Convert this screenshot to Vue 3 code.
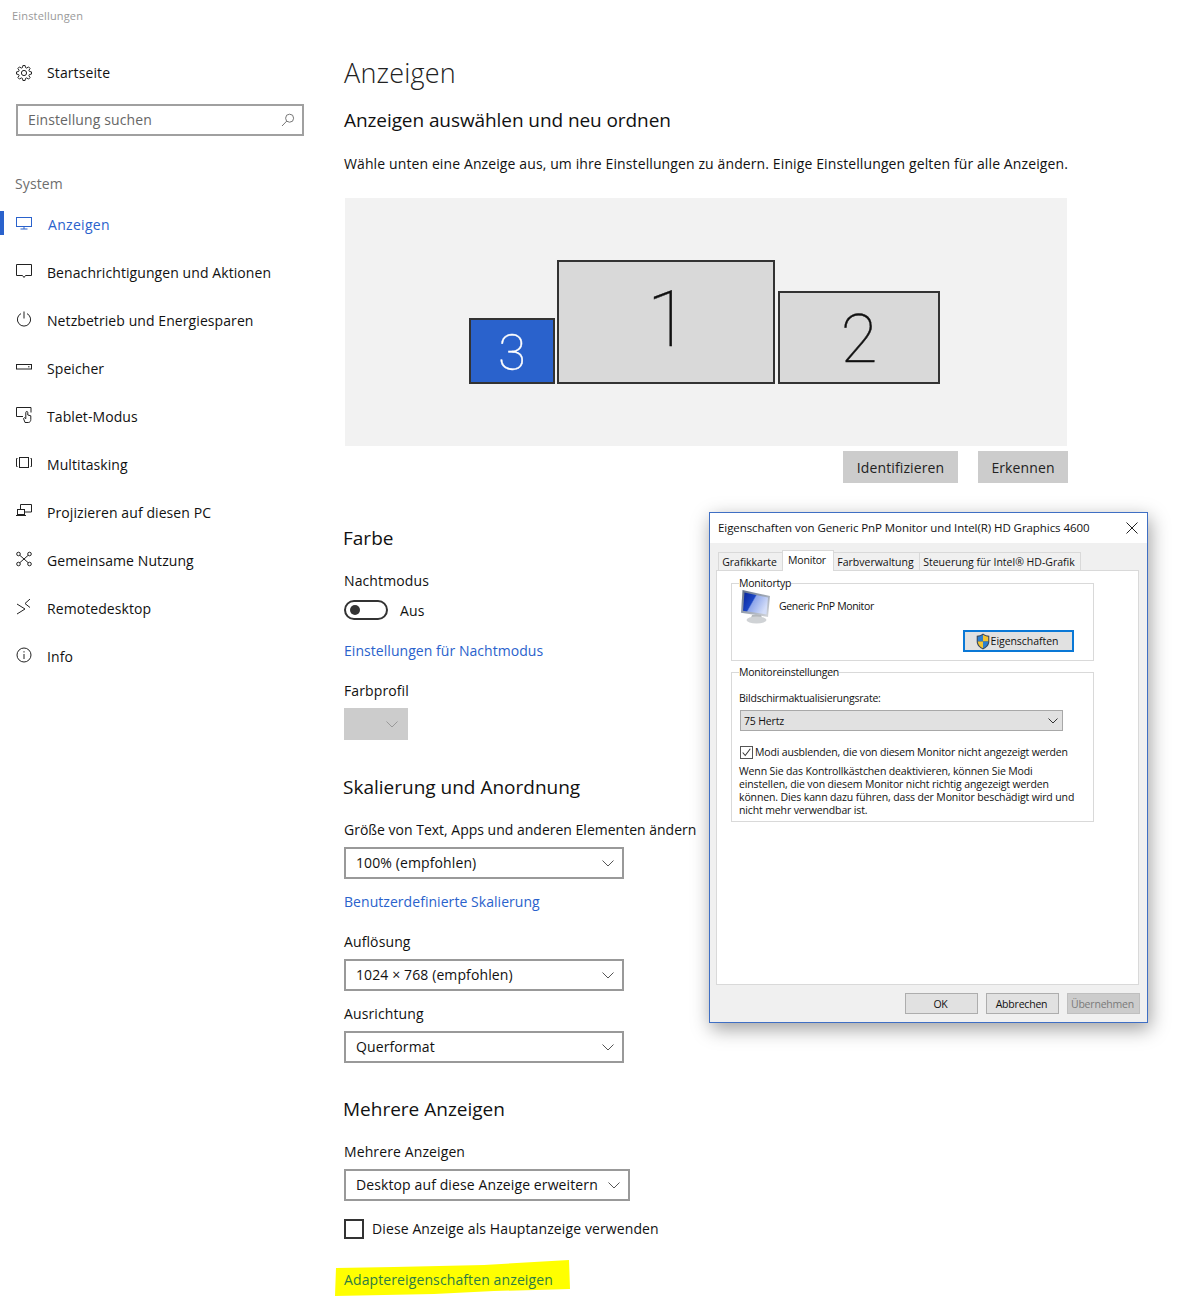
<script setup>
const gear = (() => {
  const pts = [];
  const n = 8;
  for (let i = 0; i < n; i++) {
    const a = (i / n) * Math.PI * 2;
    const w = Math.PI / n;
    const p = (r, t) => `${(8 + r * Math.cos(t)).toFixed(2)} ${(8 + r * Math.sin(t)).toFixed(2)}`;
    pts.push(p(5.6, a - w * 0.72), p(7.6, a - w * 0.36), p(7.6, a + w * 0.36), p(5.6, a + w * 0.72));
  }
  return 'M' + pts.join('L') + 'Z';
})();

const navItems = [
  { label: 'Anzeigen', icon: 'display', active: true },
  { label: 'Benachrichtigungen und Aktionen', icon: 'note' },
  { label: 'Netzbetrieb und Energiesparen', icon: 'power' },
  { label: 'Speicher', icon: 'storage' },
  { label: 'Tablet-Modus', icon: 'tablet' },
  { label: 'Multitasking', icon: 'multi' },
  { label: 'Projizieren auf diesen PC', icon: 'project' },
  { label: 'Gemeinsame Nutzung', icon: 'share' },
  { label: 'Remotedesktop', icon: 'remote' },
  { label: 'Info', icon: 'info' }
];

const tabs = [
  { label: 'Grafikkarte', w: 65 },
  { label: 'Monitor', w: 52, active: true },
  { label: 'Farbverwaltung', w: 87 },
  { label: 'Steuerung für Intel® HD-Grafik', w: 162 }
];
</script>

<template>
  <div class="page">
    <aside class="side">
      <div class="app-title">Einstellungen</div>
      <div class="home">
        <svg class="ico" viewBox="0 0 16 16"><path :d="gear" /><circle cx="8" cy="8" r="2.6" /></svg>
        <span>Startseite</span>
      </div>
      <div class="search">
        <span>Einstellung suchen</span>
        <svg class="search-ico" viewBox="0 0 14 14"><circle cx="8.6" cy="5.2" r="4" /><path d="M5.8 8 1 13" /></svg>
      </div>
      <div class="sys">System</div>
      <nav class="nav">
        <div v-for="item in navItems" :key="item.label" class="nav-item" :class="{ active: item.active }">
          <svg class="ico" viewBox="0 0 16 16">
            <g v-if="item.icon === 'display'"><rect x="0.5" y="2.5" width="15" height="9" /><path d="M8 11.5V14M4.5 14h7" /></g>
            <path v-else-if="item.icon === 'note'" d="M.5 1.5h15v11H9.5L8 14.5 6.5 12.5H.5z" />
            <g v-else-if="item.icon === 'power'"><path d="M8 .5v7" /><path d="M5 2.6a6.6 6.6 0 1 0 6 0" /></g>
            <g v-else-if="item.icon === 'storage'"><rect x="0.5" y="5.5" width="15" height="4.5" /><path d="M12 7.8h1.5" /></g>
            <g v-else-if="item.icon === 'tablet'"><path d="M7 9.500H.5V.5h14.500v5" /><path d="M9 15.500 7.500 11.500l1-.8 1.300 1V5.500a1 1 0 0 1 2 0V8l3 .8v3.700c0 1.500-.8 3-2.500 3z" /></g>
            <g v-else-if="item.icon === 'multi'"><rect x="3.500" y="2.500" width="9" height="10" /><path d="M1.500 3.500H.5v8h1M14.500 3.500h1v8h-1" /></g>
            <g v-else-if="item.icon === 'project'"><path d="M4.500 6V1.500h11v7.500H9" /><rect x="1.500" y="6.500" width="7" height="5" /><path d="M0 12.500h10" /></g>
            <g v-else-if="item.icon === 'share'"><circle cx="2.500" cy="3" r="1.800" /><circle cx="13.500" cy="3" r="1.800" /><circle cx="2.500" cy="13" r="1.800" /><circle cx="13.500" cy="13" r="1.800" /><path d="M3.800 4.300 12.200 11.700M12.200 4.300 3.800 11.700" /></g>
            <g v-else-if="item.icon === 'remote'"><path d="M1 5 9 10 1 15" /><path d="M14 0 9 4.500 14 8.500" /></g>
            <g v-else-if="item.icon === 'info'"><circle cx="8" cy="8" r="7" /><path d="M8 7v5M8 4.200v1.300" /></g>
          </svg>
          <span class="nav-text">{{ item.label }}</span>
        </div>
      </nav>
    </aside>

    <main class="main">
      <h1 class="title">Anzeigen</h1>
      <h2 class="sub">Anzeigen auswählen und neu ordnen</h2>
      <p class="desc">Wähle unten eine Anzeige aus, um ihre Einstellungen zu ändern. Einige Einstellungen gelten für alle Anzeigen.</p>

      <div class="canvas">
        <div class="mon mon3">3</div>
        <div class="mon mon1">1</div>
        <div class="mon mon2">2</div>
      </div>
      <div class="canvas-btns">
        <div class="gbtn b-id">Identifizieren</div>
        <div class="gbtn b-er">Erkennen</div>
      </div>

      <h2 class="sec s-farbe">Farbe</h2>
      <div class="lbl mt19">Nachtmodus</div>
      <div class="toggle-row">
        <span class="toggle"><i></i></span>
        <span>Aus</span>
      </div>
      <div class="link mt21">Einstellungen für Nachtmodus</div>
      <div class="lbl mt20">Farbprofil</div>
      <div class="mini-select">
        <svg class="chev" viewBox="0 0 12 7"><path d="M.5.5 6 6 11.500.5" /></svg>
      </div>

      <h2 class="sec s-skal">Skalierung und Anordnung</h2>
      <div class="lbl tight mt19">Größe von Text, Apps und anderen Elementen ändern</div>
      <div class="select">
        <span class="raise">100% (empfohlen)</span>
        <svg class="chev" viewBox="0 0 12 7"><path d="M.5.5 6 6 11.500.5" /></svg>
      </div>
      <div class="link mt13">Benutzerdefinierte Skalierung</div>
      <div class="lbl mt20">Auflösung</div>
      <div class="select">
        <span class="raise">1024 × 768 (empfohlen)</span>
        <svg class="chev" viewBox="0 0 12 7"><path d="M.5.5 6 6 11.500.5" /></svg>
      </div>
      <div class="lbl mt13">Ausrichtung</div>
      <div class="select">
        <span class="raise">Querformat</span>
        <svg class="chev" viewBox="0 0 12 7"><path d="M.5.5 6 6 11.500.5" /></svg>
      </div>

      <h2 class="sec s-mehr">Mehrere Anzeigen</h2>
      <div class="lbl mt19">Mehrere Anzeigen</div>
      <div class="select wide">
        <span class="raise">Desktop auf diese Anzeige erweitern</span>
        <svg class="chev" viewBox="0 0 12 7"><path d="M.5.5 6 6 11.500.5" /></svg>
      </div>
      <div class="check-row">
        <span class="check"></span>
        <span class="raise">Diese Anzeige als Hauptanzeige verwenden</span>
      </div>
      <div class="hl-link">
        <svg class="marker" viewBox="0 0 238 38"><path d="M2 9 60 8 150 6 235 1 236 30 160 32 100 35 1 37Z" /></svg>
        <span>Adaptereigenschaften anzeigen</span>
      </div>
    </main>

    <section class="dialog">
      <header class="d-title">
        <span>Eigenschaften von Generic PnP Monitor und Intel(R) HD Graphics 4600</span>
        <svg class="d-x" viewBox="0 0 12 12"><path d="M.5.5l11 11M11.500.5l-11 11" /></svg>
      </header>
      <div class="d-body">
        <div class="tabs">
          <div v-for="t in tabs" :key="t.label" class="tab" :class="{ on: t.active }" :style="{ width: t.w + 'px' }">{{ t.label }}</div>
        </div>
        <div class="panel">
          <fieldset class="grp g1">
            <legend>Monitortyp</legend>
            <div class="mon-row">
              <svg class="mon-ico" viewBox="0 0 30 34">
                <defs>
                  <linearGradient id="sg" x1="0" y1="0" x2="1" y2="0.5"><stop offset="0" stop-color="#08249a" /><stop offset="0.45" stop-color="#1c46c4" /><stop offset="0.5" stop-color="#8ea6ea" /><stop offset="1" stop-color="#d3ddf8" /></linearGradient>
                  <linearGradient id="fr" x1="0" y1="0" x2="1" y2="1"><stop offset="0" stop-color="#5f6f88" /><stop offset="1" stop-color="#d8dadd" /></linearGradient>
                </defs>
                <path d="M1.500 0 29 6 27 27 0 22.700Z" fill="url(#fr)" />
                <path d="M3.500 2.500 27 7.500 25.500 24.500 2 20.700Z" fill="url(#sg)" />
                <path d="M11 25h9l1 3H10Z" fill="#b4b8bc" />
                <ellipse cx="15.500" cy="30" rx="10" ry="3.500" fill="#cfd2d5" />
              </svg>
              <span>Generic PnP Monitor</span>
            </div>
            <div class="shield-btn">
              <svg class="shield" viewBox="0 0 14 17">
                <path d="M7 .5C5 2 3 2.700.7 2.800v6C.7 12.500 4 15 7 16.500c3-1.500 6.300-4 6.300-7.700v-6C11 2.700 9 2 7 .5Z" fill="#3c4a5c" />
                <path d="M7 1.800v6.700H1.800V3.700C3.600 3.500 5.500 3 7 1.800Z" fill="#2c7fd0" />
                <path d="M7 1.800v6.700h5.200V3.700C10.400 3.500 8.500 3 7 1.800Z" fill="#f4c430" />
                <path d="M7 8.500v6.800C4.500 14 1.900 12 1.800 8.500Z" fill="#f4c430" />
                <path d="M7 8.500v6.800c2.500-1.300 5.100-3.300 5.200-6.800Z" fill="#2c7fd0" />
              </svg>
              <span>Eigenschaften</span>
            </div>
          </fieldset>
          <fieldset class="grp g2">
            <legend>Monitoreinstellungen</legend>
            <div class="rate-lbl">Bildschirmaktualisierungsrate:</div>
            <div class="rate">
              <span>75 Hertz</span>
              <svg class="rate-chev" viewBox="0 0 10 6"><path d="M.5.5 5 5 9.500.5" /></svg>
            </div>
            <div class="d-check">
              <span class="d-box"><svg viewBox="0 0 13 13"><path d="M2 6.500 5 10l6-8" /></svg></span>
              <span>Modi ausblenden, die von diesem Monitor nicht angezeigt werden</span>
            </div>
            <p class="hint">Wenn Sie das Kontrollkästchen deaktivieren, können Sie Modi<br />einstellen, die von diesem Monitor nicht richtig angezeigt werden<br />können. Dies kann dazu führen, dass der Monitor beschädigt wird und<br />nicht mehr verwendbar ist.</p>
          </fieldset>
        </div>
        <div class="d-actions">
          <div class="d-btn">OK</div>
          <div class="d-btn">Abbrechen</div>
          <div class="d-btn off">Übernehmen</div>
        </div>
      </div>
    </section>
  </div>
</template>

<style>
html, body { margin: 0; background: #fff; }
</style>

<style scoped>
.page {
  position: relative;
  display: flex;
  width: 1181px;
  height: 1298px;
  overflow: hidden;
  background: #fff;
  color: #111;
  font-family: "Open Sans", "Noto Sans", sans-serif;
  font-size: 14px;
  letter-spacing: 0.11px;
}
h1, h2, p { margin: 0; font-weight: 400; }

/* sidebar */
.side { width: 344px; flex: none; display: flex; flex-direction: column; }
.app-title { margin: 8px 0 0 12px; height: 16px; line-height: 16px; font-size: 11px; color: #999; letter-spacing: 0.17px; }
.home { display: flex; align-items: center; height: 24px; margin-top: 37px; padding-left: 16px; gap: 15px; }
.home span { padding-bottom: 2px; }
.ico { width: 16px; height: 16px; flex: none; fill: none; stroke: #222; stroke-width: 1; }
.search {
  display: flex; align-items: center; justify-content: space-between;
  box-sizing: border-box; width: 288px; height: 32px; margin: 19px 0 0 16px; padding: 0 7px 0 10px;
  border: 2px solid #a0a0a0; color: #666;
}
.search span { padding-bottom: 2px; }
.search-ico { width: 14px; height: 14px; fill: none; stroke: #777; stroke-width: 1; }
.sys { margin: 38px 0 0 15px; height: 20px; line-height: 20px; color: #6e6e6e; }
.nav { margin-top: 5px; }
.nav-item { position: relative; display: flex; align-items: center; height: 48px; padding-left: 16px; gap: 15px; }
.nav-text { padding-top: 2px; letter-spacing: 0.08px; }
.nav-item.active { color: #2a62cc; gap: 16px; }
.nav-item.active .nav-text { letter-spacing: 0.3px; }
.nav-item.active .ico { stroke: #2a62cc; }
.nav-item.active::before { content: ""; position: absolute; left: 0; top: 12px; width: 4px; height: 24px; background: #2a62cc; }

/* main column */
.main { flex: 1; min-width: 0; padding-top: 53px; }
.title { height: 40px; line-height: 40px; font-size: 27px; font-weight: 300; color: #222; letter-spacing: 0.2px; }
.sub { height: 28px; line-height: 28px; margin-top: 13px; font-size: 19px; color: #111; letter-spacing: -0.08px; }
.desc { height: 20px; line-height: 20px; margin-top: 20px; white-space: nowrap; }
.canvas { position: relative; width: 722px; height: 248px; margin: 24px 0 0 1px; background: #f2f2f2; }
.mon {
  position: absolute; box-sizing: border-box; display: flex; align-items: center; justify-content: center;
  border: 2px solid #333; background: #d9d9d9; color: #111;
  font-family: "Roboto", sans-serif; font-weight: 100; line-height: 1;
  -webkit-text-stroke: 0.4px currentColor; letter-spacing: 0;
}
.mon1 { left: 212px; top: 62px; width: 218px; height: 124px; font-size: 77px; padding: 0 0 4px 4px; }
.mon2 { left: 433px; top: 93px; width: 162px; height: 93px; font-size: 67px; padding-top: 4px; }
.mon3 { left: 124px; top: 120px; width: 86px; height: 66px; font-size: 50px; background: #2a62cc; color: #fff; padding-top: 4px; }
.canvas-btns { display: flex; justify-content: flex-end; gap: 20px; width: 724px; margin-top: 5px; }
.gbtn { height: 32px; line-height: 34px; background: #cccccc; text-align: center; color: #222; }
.b-id { width: 115px; }
.b-er { width: 90px; }
.sec { height: 28px; line-height: 28px; margin-left: -1px; font-size: 19px; color: #111; letter-spacing: 0; }
.s-farbe { margin-top: 41px; }
.s-skal { margin-top: 33px; }
.s-mehr { margin-top: 32px; }
.lbl { height: 20px; line-height: 20px; white-space: nowrap; }
.tight { letter-spacing: 0; }
.link { height: 20px; line-height: 20px; color: #2a62cc; letter-spacing: 0.05px; }
.mt13 { margin-top: 13px; }
.mt19 { margin-top: 19px; }
.mt20 { margin-top: 20px; }
.mt21 { margin-top: 21px; }
.toggle-row { display: flex; align-items: center; height: 20px; margin-top: 9px; gap: 12px; }
.toggle { box-sizing: border-box; display: flex; align-items: center; width: 44px; height: 20px; padding-left: 4px; border: 2px solid #333; border-radius: 10px; }
.toggle i { width: 10px; height: 10px; border-radius: 50%; background: #333; }
.mini-select { position: relative; width: 64px; height: 32px; margin-top: 7px; background: #cccccc; }
.mini-select .chev { position: absolute; left: 42px; top: 13px; stroke: #999; }
.chev { width: 12px; height: 7px; fill: none; stroke: #555; stroke-width: 1; flex: none; }
.select {
  display: flex; align-items: center; justify-content: space-between; box-sizing: border-box;
  width: 280px; height: 32px; margin-top: 7px; padding: 0 8px 0 10px;
  border: 2px solid #999; color: #111;
}
.select.wide { width: 286px; }
.raise { padding-bottom: 2px; }
.check-row { display: flex; align-items: center; gap: 8px; height: 20px; margin-top: 18px; }
.check { box-sizing: border-box; width: 20px; height: 20px; border: 2px solid #333; }
.hl-link { position: relative; height: 20px; line-height: 20px; margin-top: 31px; color: #2e7c44; white-space: nowrap; }
.hl-link span { position: relative; }
.marker { position: absolute; left: -10px; top: -11px; width: 238px; height: 38px; fill: #ffff00; }

/* dialog */
.dialog {
  position: absolute; left: 709px; top: 512px; box-sizing: border-box;
  display: flex; flex-direction: column;
  width: 439px; height: 511px;
  border: 1px solid #3f6fc4; background: #f0f0f0;
  box-shadow: 2px 6px 18px rgba(0, 0, 0, .38);
  font-size: 10.5px; color: #111; letter-spacing: -0.16px;
}
.d-title {
  display: flex; align-items: center; justify-content: space-between; flex: none;
  height: 30px; padding: 0 9px 0 8px; background: #fff; font-size: 11.5px; letter-spacing: -0.07px;
}
.d-title span { padding-bottom: 2px; }
.d-x { width: 12px; height: 12px; fill: none; stroke: #222; stroke-width: 1; }
.d-body { flex: 1; display: flex; flex-direction: column; padding: 7px 8px 0 6px; min-height: 0; }
.tabs { display: flex; flex: none; height: 20px; padding-left: 3px; align-items: flex-end; position: relative; z-index: 1; }
.tab {
  box-sizing: border-box; flex: none; height: 18px; line-height: 18px; text-align: center;
  border: 1px solid #d9d9d9; border-bottom: 0; margin-left: -1px; white-space: nowrap; letter-spacing: 0;
  padding-right: 2px;
}
.tab.on { height: 21px; line-height: 18px; margin-bottom: -1px; background: #fff; letter-spacing: -0.2px; }
.panel { flex: none; box-sizing: border-box; height: 415px; border: 1px solid #d9d9d9; background: #fff; padding: 5px 44px 0 14px; }
.grp { position: relative; box-sizing: border-box; margin: 0; padding: 0; border: 1px solid #d9d9d9; min-width: 0; width: 363px; }
.grp legend { margin-left: 7px; padding: 0; line-height: 14px; letter-spacing: -0.25px; }
.g1 { height: 85px; }
.g2 { height: 157px; margin-top: 4px; padding: 0 8px; }
.g2 legend { margin-left: -1px; }
.mon-row { display: flex; align-items: center; gap: 8px; padding: 0 0 0 9px; }
.mon-ico { width: 30px; height: 34px; flex: none; }
.mon-row span { margin-top: -2px; letter-spacing: -0.35px; }
.shield-btn {
  position: absolute; left: 231px; top: 40px; box-sizing: border-box; width: 111px; height: 22px;
  display: flex; align-items: center; justify-content: center; gap: 1px; padding-right: 3px;
  border: 2px solid #0a78d6; background: #e1e1e1; letter-spacing: -0.05px;
}
.shield { width: 14px; height: 17px; flex: none; }
.rate-lbl { margin-top: 12px; height: 14px; line-height: 14px; margin-left: -1px; letter-spacing: -0.22px; }
.rate {
  display: flex; align-items: center; justify-content: space-between; box-sizing: border-box;
  width: 323px; height: 21px; margin-top: 5px; padding: 0 4px 0 3px;
  border: 1px solid #a8a8a8; background: #e1e1e1;
}
.rate-chev { width: 10px; height: 6px; fill: none; stroke: #333; stroke-width: 1; }
.d-check { display: flex; align-items: center; gap: 2px; height: 14px; margin-top: 14px; white-space: nowrap; }
.d-box { box-sizing: border-box; width: 13px; height: 13px; border: 1px solid #555; flex: none; }
.d-box svg { display: block; width: 11px; height: 11px; fill: none; stroke: #333; stroke-width: 1.2; }
.hint { margin-top: 6px; margin-left: -1px; line-height: 13px; white-space: nowrap; letter-spacing: -0.13px; }
.d-actions { display: flex; justify-content: flex-end; gap: 8px; margin-top: 8px; margin-right: -1px; }
.d-btn {
  box-sizing: border-box; width: 73px; height: 21px; line-height: 20px; text-align: center;
  border: 1px solid #adadad; background: #e1e1e1; padding-right: 2px; letter-spacing: -0.2px;
}
.d-btn.off { background: #cccccc; color: #7a7a7a; border-color: #bfbfbf; }
</style>
